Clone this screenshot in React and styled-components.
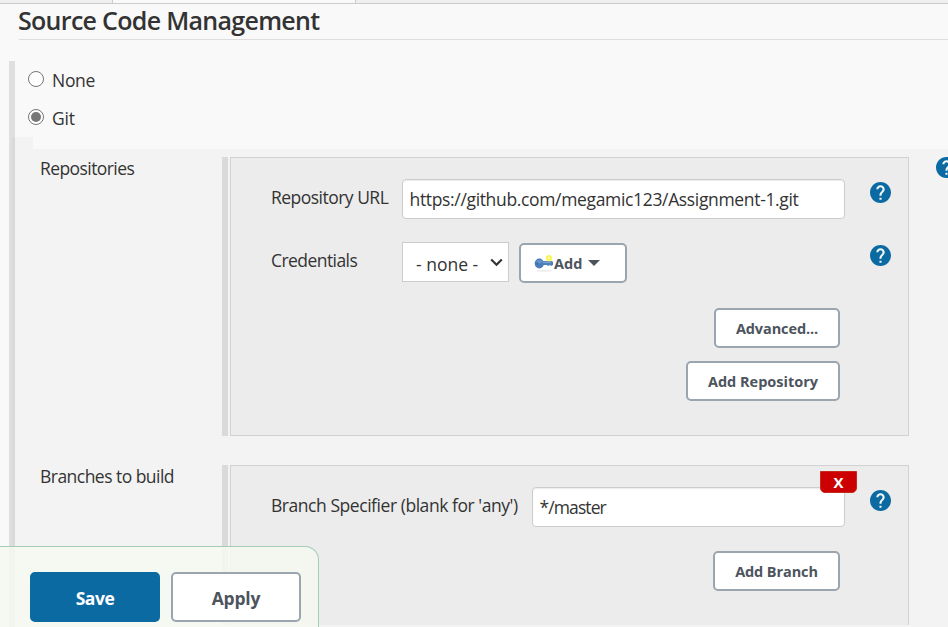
import React from 'react';
import styled, { createGlobalStyle } from 'styled-components';

const GlobalStyle = createGlobalStyle`
  *, *::before, *::after { box-sizing: border-box; }
  body { margin: 0; background: #f9f9f9; overflow: hidden; }
`;

const Page = styled.div`
  position: relative;
  width: 948px;
  height: 627px;
  overflow: hidden;
  display: flex;
  flex-direction: column;
  background: #f9f9f9;
  color: #333;
  font: 400 17.5px/24px "Open Sans", "Noto Sans", sans-serif;
`;

const TabStrip = styled.div`
  display: flex;
  flex: none;
  height: 4px;
  border-bottom: 1px solid #ccc;
  background: #efefef;
`;

const ActiveTab = styled.div`
  width: 244px;
  margin-left: 112px;
  border: solid #ccc;
  border-width: 0 1px;
  background: #f9f9f9;
`;

const Title = styled.h1`
  flex: none;
  height: 36px;
  margin: 0 0 0 19px;
  border-bottom: 1px solid #ddd;
  font-size: 25px;
  font-weight: 600;
  line-height: 32px;
  letter-spacing: -0.7px;
  text-indent: -1px;
  white-space: nowrap;
`;

const Section = styled.section`
  display: flex;
  flex: none;
  height: 566px;
  margin: 21px 0 0 9px;
`;

const SectionBar = styled.div`
  width: 6px;
  flex: none;
  background: #dfdfdf;
`;

const SectionBody = styled.div`
  flex: 1;
  min-width: 0;
`;

const Options = styled.div`
  height: 76px;
  padding: 8px 0 0 13px;
  display: flex;
  flex-direction: column;
  gap: 14px;
`;

const Option = styled.label`
  display: flex;
  gap: 8px;
  height: 24px;
  line-height: 22px;
`;

const Radio = styled.span`
  display: flex;
  align-items: center;
  justify-content: center;
  width: 16px;
  height: 16px;
  margin-top: 2px;
  border: 1px solid #767676;
  border-radius: 50%;
  background: #fff;
  &::after {
    content: '';
    width: 10px;
    height: 10px;
    border-radius: 50%;
    background: ${(p) => (p.$checked ? '#767676' : 'transparent')};
  }
`;

const Text = styled.span`
  letter-spacing: ${(p) => p.$track || 0}px;
  white-space: pre;
`;

const PanelTab = styled.div`
  width: 21px;
  height: 12px;
  margin-left: -3px;
  background: rgba(0, 0, 0, 0.025);
`;

const Panel = styled.div`
  display: flex;
  flex-direction: column;
  gap: 29px;
  height: 478px;
  margin-left: -3px;
  padding: 8px 0 0 28px;
  background: rgba(0, 0, 0, 0.025);
`;

const Entry = styled.div`
  display: flex;
  height: ${(p) => p.$height}px;
`;

const EntryLabel = styled.div`
  flex: none;
  width: 182px;
  line-height: 22px;
`;

const EntryBar = styled.div`
  flex: none;
  width: 6px;
  margin-right: 2px;
  background: #dadada;
`;

const Box = styled.div`
  position: relative;
  flex: none;
  width: 679px;
  margin-right: 27px;
  padding: 21px 0 0 40px;
  border: 1px solid #d2d2d2;
  border-bottom-width: ${(p) => (p.$open ? 0 : 1)}px;
  background: #ececec;
`;

const Row = styled.div`
  display: flex;
  height: 40px;
  margin-bottom: 23px;
`;

const FieldLabel = styled.div`
  flex: none;
  width: ${(p) => p.$width}px;
  line-height: 37px;
`;

const Input = styled.div`
  flex: none;
  width: ${(p) => p.$width}px;
  height: 40px;
  margin-right: 25px;
  padding-left: 6.5px;
  border: 1px solid #ccc;
  border-radius: 4px;
  background: #fff;
  box-shadow: inset 0 1px 1px rgba(0, 0, 0, 0.075);
  line-height: 39px;
`;

const Select = styled.div`
  display: flex;
  align-items: center;
  justify-content: space-between;
  width: 107px;
  height: 40px;
  margin-right: 10px;
  padding: 4px 5px 0 13px;
  border: 1px solid #ccc;
  background: #fff;
  svg { margin-top: -4px; }
`;

const Button = styled.button`
  display: flex;
  align-items: center;
  justify-content: center;
  flex: none;
  width: ${(p) => p.$width}px;
  height: ${(p) => (p.$large ? 50 : 40)}px;
  padding: 1px 0 0;
  border: 2px solid ${(p) => (p.$primary ? '#0b6aa2' : '#9aa5af')};
  border-radius: 5px;
  background: ${(p) => (p.$primary ? '#0b6aa2' : '#fff')};
  color: ${(p) => (p.$primary ? '#fff' : '#4d545d')};
  font: 700 ${(p) => (p.$large ? 17.5 : 14.5)}px "Open Sans", "Noto Sans", sans-serif;
`;

const AddButton = styled(Button)`
  justify-content: flex-start;
  margin: 1px 243px 0 0;
  padding-left: 13px;
`;

const Caret = styled.span`
  margin: -2px 0 0 6px;
  border: 6px solid transparent;
  border-top-color: #4d545d;
  border-bottom: 0;
`;

const Actions = styled.div`
  display: flex;
  flex-direction: column;
  align-items: flex-end;
  gap: 13px;
  width: 569px;
  margin-top: ${(p) => p.$top}px;
`;

const HelpSvg = styled.svg`
  flex: none;
  width: 21px;
  height: 21px;
  margin-top: ${(p) => p.$top || 0}px;
`;

const Remove = styled.button`
  position: absolute;
  top: 5px;
  right: 51px;
  width: 37px;
  height: 22px;
  padding: 0;
  border: 1px solid #c42b1c;
  border-radius: 0 0 5px 5px;
  background: #c00;
  color: #fff;
  font: 700 15px/19px "Open Sans", "Noto Sans", sans-serif;
`;

const Footer = styled.div`
  position: absolute;
  left: 0;
  bottom: 0;
  display: flex;
  gap: 11px;
  width: 319px;
  height: 81px;
  padding: 25px 0 0 30px;
  border: solid #a5ccb9;
  border-width: 1px 1px 0 0;
  border-radius: 0 14px 0 0;
  background: rgba(245, 249, 240, 0.85);
`;

const Help = ({ top }) => (
  <HelpSvg $top={top} viewBox="2 2 20 20">
    <circle cx="12" cy="12" r="9" fill="#f4f8fa" />
    <path
      fill="#0b6aa2"
      d="M12 2C6.48 2 2 6.48 2 12s4.48 10 10 10 10-4.48 10-10S17.52 2 12 2zm1 17h-2v-2h2v2zm2.07-7.75l-.9.92C13.45 12.9 13 13.5 13 15h-2v-.5c0-1.1.45-2.1 1.17-2.83l1.24-1.26c.37-.36.59-.86.59-1.41 0-1.1-.9-2-2-2s-2 .9-2 2H8c0-2.21 1.79-4 4-4s4 1.79 4 4c0 .88-.36 1.68-.93 2.25z"
    />
  </HelpSvg>
);

const KeyIcon = () => (
  <svg width="20" height="18" viewBox="0 0 20 18">
    <ellipse cx="10" cy="15.8" rx="8" ry="1" fill="#eee" />
    <path d="M7 6h11l1 1v3l-2 1-1-1-2 1-1-1H7z" fill="#4f81bd" />
    <ellipse cx="5.3" cy="8.5" rx="4.6" ry="5" fill="#4a7ebb" />
    <ellipse cx="5.5" cy="6.6" rx="3.2" ry="1.8" fill="#6592c8" />
    <circle cx="3.3" cy="8.5" r="0.9" fill="#3a69a6" />
    <path d="M9 7.3h8" stroke="#87aad5" />
    <circle cx="15" cy="3.2" r="3.1" fill="#fbf45b" />
    <circle cx="15" cy="3.2" r="1.1" fill="#fffbb0" />
  </svg>
);

export default function App() {
  return (
    <>
      <GlobalStyle />
      <Page>
        <TabStrip><ActiveTab /></TabStrip>
        <Title>Source Code Management</Title>
        <Section>
          <SectionBar />
          <SectionBody>
            <Options>
              <Option><Radio /><Text $track={-0.3}>None</Text></Option>
              <Option><Radio $checked /><Text $track={-0.2}>Git</Text></Option>
            </Options>
            <PanelTab />
            <Panel>
              <Entry $height={279}>
                <EntryLabel><Text $track={-0.58}>Repositories</Text></EntryLabel>
                <EntryBar />
                <Box>
                  <Row>
                    <FieldLabel $width={131}><Text $track={-0.52}>Repository URL</Text></FieldLabel>
                    <Input $width={443}><Text $track={-0.34}>https://github.com/megamic123/Assignment-1.git</Text></Input>
                    <Help top={3} />
                  </Row>
                  <Row>
                    <FieldLabel $width={131}><Text $track={-0.56}>Credentials</Text></FieldLabel>
                    <Select>
                      <Text>- none -</Text>
                      <svg width="13" height="9" viewBox="0 0 13 9">
                        <path d="M1.2 1.5l5.3 5.3 5.3-5.3" fill="none" stroke="#333" strokeWidth="2.2" />
                      </svg>
                    </Select>
                    <AddButton $width={108}><KeyIcon /><Text>Add</Text><Caret /></AddButton>
                    <Help top={3} />
                  </Row>
                  <Actions $top={26}>
                    <Button $width={126}><Text $track={-0.1}>Advanced...</Text></Button>
                    <Button $width={154}><Text>Add Repository</Text></Button>
                  </Actions>
                </Box>
                <Help />
              </Entry>
              <Entry $height={160}>
                <EntryLabel><Text $track={-0.53}>Branches to build</Text></EntryLabel>
                <EntryBar />
                <Box $open>
                  <Row>
                    <FieldLabel $width={261}><Text $track={-0.45}>Branch Specifier (blank for 'any')</Text></FieldLabel>
                    <Input $width={313}><Text $track={-0.9}>*/master</Text></Input>
                    <Help top={3} />
                  </Row>
                  <Actions $top={24}>
                    <Button $width={127}><Text $track={-0.1}>Add Branch</Text></Button>
                  </Actions>
                  <Remove>X</Remove>
                </Box>
              </Entry>
            </Panel>
          </SectionBody>
        </Section>
        <Footer>
          <Button $large $primary $width={130}><Text $track={-0.5}>Save</Text></Button>
          <Button $large $width={130}><Text $track={-0.2}>Apply</Text></Button>
        </Footer>
      </Page>
    </>
  );
}
